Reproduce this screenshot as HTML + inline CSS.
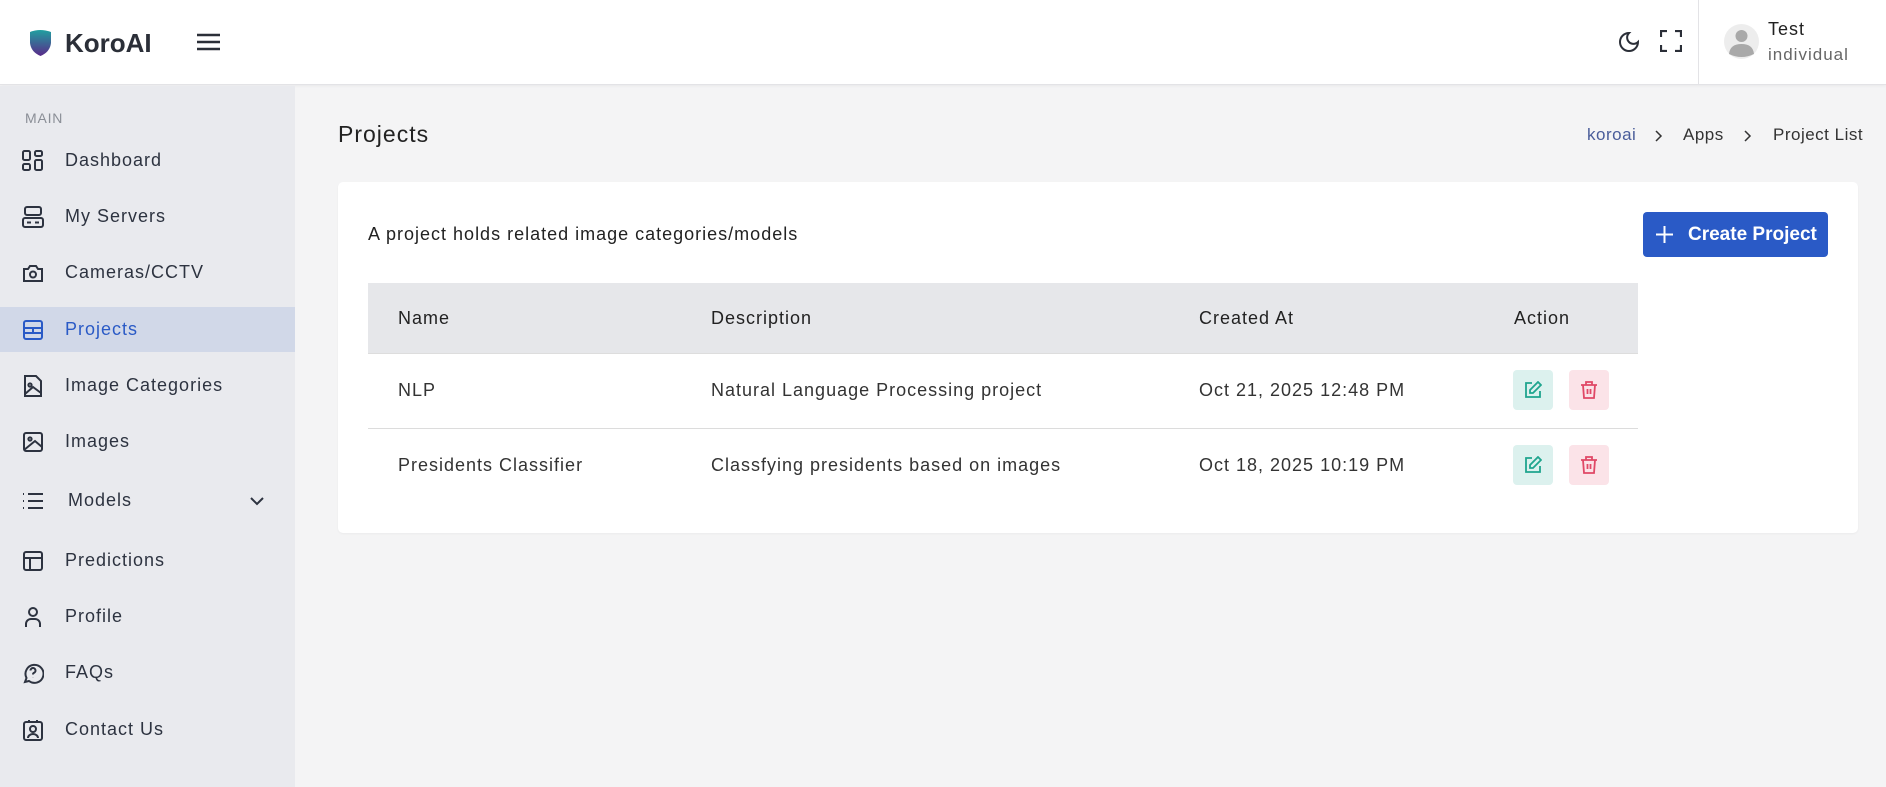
<!DOCTYPE html>
<html><head><meta charset="utf-8"><style>
*{box-sizing:border-box;margin:0;padding:0}
body{width:1886px;height:787px;overflow:hidden;background:#f4f4f5;font-family:"Liberation Sans",sans-serif;color:#2b2f38;position:relative;letter-spacing:1px}
.abs{position:absolute}
.hdr{left:0;top:0;width:1886px;height:85px;background:#fff;border-bottom:1px solid #e3e3e6;box-shadow:0 1px 3px rgba(0,0,0,.05)}
.side{left:0;top:86px;width:295px;height:701px;background:#e9eaee}
.item{position:absolute;left:0;width:295px;height:45px;display:flex;align-items:center;font-size:18px;color:#2d3340}
.item svg{position:absolute;left:22px;width:22px;height:22px}
.item span{position:absolute;left:65px}
.sel{background:#d1d8e8;color:#2a5ac6}
.t{position:absolute;white-space:nowrap}
</style></head><body>
<div class="abs hdr"></div>
<svg class="abs" style="left:28px;top:29px" width="25" height="28" viewBox="0 0 25 28"><defs><linearGradient id="g" x1="0" y1="0" x2="0" y2="1"><stop offset="0" stop-color="#21a0a0"/><stop offset="1" stop-color="#5a2a8a"/></linearGradient></defs><path d="M2 3 Q12 -1 23 3 L23 14 Q22 23 12.5 27 Q3 23 2 14Z" fill="url(#g)"/></svg>
<div class="t" style="left:65px;top:28px;font-size:26px;font-weight:bold;color:#2b2f38;letter-spacing:0">KoroAI</div>
<svg class="abs" style="left:196px;top:32px" width="25" height="20"><path d="M1 3H24M1 10H24M1 17H24" stroke="#2b2f38" stroke-width="2.4"/></svg>
<svg class="abs" style="left:1617px;top:30px" width="24" height="24" viewBox="0 0 24 24" fill="none" stroke="#2b2f38" stroke-width="2"><path d="M12 3a6 6 0 0 0 9 9 9 9 0 1 1-9-9z"/></svg>
<svg class="abs" style="left:1660px;top:30px" width="22" height="22" viewBox="0 0 22 22" fill="none" stroke="#2b2f38" stroke-width="2.2"><path d="M1 7V1H7M15 1H21V7M21 15V21H15M7 21H1V15"/></svg>
<div class="abs" style="left:1698px;top:0;width:1px;height:85px;background:#e3e3e6"></div>
<svg class="abs" style="left:1724px;top:24px" width="35" height="35" viewBox="0 0 35 35"><circle cx="17.5" cy="17.5" r="17.5" fill="#ededed"/><circle cx="17.5" cy="12" r="6" fill="#a9a9a9"/><path d="M5 30Q6 20 17.5 20Q29 20 30 30Q17.5 36 5 30Z" fill="#a9a9a9"/></svg>
<div class="t" style="left:1768px;top:19px;font-size:18px;color:#222">Test</div>
<div class="t" style="left:1768px;top:45px;font-size:17px;color:#666">individual</div>

<div class="abs side"></div>
<div class="t" style="left:25px;top:110px;font-size:14px;color:#8a8e96;letter-spacing:.8px">MAIN</div>
<div class="item" style="top:138px"><svg viewBox="0 0 22 22" fill="none" stroke="#2d3340" stroke-width="2"><rect x="1" y="1" width="7" height="9" rx="1.5"/><rect x="13" y="1" width="7" height="5" rx="1.5"/><rect x="1" y="14" width="7" height="6" rx="1.5"/><rect x="13" y="10" width="7" height="10" rx="1.5"/></svg><span>Dashboard</span></div>
<div class="item" style="top:194px"><svg viewBox="0 0 22 22" fill="none" stroke="#2d3340" stroke-width="2"><rect x="3" y="1" width="16" height="8" rx="2"/><rect x="1" y="12" width="20" height="9" rx="2"/><path d="M5 16.5H9M13 16.5H17"/></svg><span>My Servers</span></div>
<div class="item" style="top:250px"><svg viewBox="0 0 22 22" fill="none" stroke="#2d3340" stroke-width="2"><path d="M2 7h4l2-3h6l2 3h4v12H2z"/><circle cx="11" cy="12.5" r="3"/></svg><span>Cameras/CCTV</span></div>
<div class="item sel" style="top:307px"><svg viewBox="0 0 22 22" fill="none" stroke="#2a5ac6" stroke-width="2"><rect x="2" y="2" width="18" height="18" rx="2"/><path d="M2 9H20M2 14H20M11 9V14"/></svg><span>Projects</span></div>
<div class="item" style="top:363px"><svg viewBox="0 0 22 22" fill="none" stroke="#2d3340" stroke-width="2"><path d="M3 1h11l5 5v15H3z"/><circle cx="8" cy="10" r="1.6"/><path d="M3 19l8-7 8 6"/></svg><span>Image Categories</span></div>
<div class="item" style="top:419px"><svg viewBox="0 0 22 22" fill="none" stroke="#2d3340" stroke-width="2"><rect x="2" y="2" width="18" height="18" rx="2"/><circle cx="8" cy="8" r="1.6"/><path d="M2 19l11-9 7 6"/></svg><span>Images</span></div>
<div class="item" style="top:478px"><svg viewBox="0 0 22 22" fill="none" stroke="#2d3340" stroke-width="2"><path d="M1 4h1M1 11h1M1 18h1M6 4h15M6 11h15M6 18h15"/></svg><span style="left:68px">Models</span><svg style="left:248px;width:18px" viewBox="0 0 18 22" fill="none" stroke="#2d3340" stroke-width="2"><path d="M3 8l6 6 6-6"/></svg></div>
<div class="item" style="top:538px"><svg viewBox="0 0 22 22" fill="none" stroke="#2d3340" stroke-width="2"><rect x="2" y="2" width="18" height="18" rx="2"/><path d="M2 8H20M8 8V20"/></svg><span>Predictions</span></div>
<div class="item" style="top:594px"><svg viewBox="0 0 22 22" fill="none" stroke="#2d3340" stroke-width="2"><circle cx="11" cy="6" r="4"/><path d="M4 21v-3a5 5 0 0 1 5-5h4a5 5 0 0 1 5 5v3"/></svg><span>Profile</span></div>
<div class="item" style="top:650px"><svg viewBox="0 0 22 22" fill="none" stroke="#2d3340" stroke-width="2"><path d="M3 20l1.5-4A9 9 0 1 1 7 19z"/><path d="M8.5 8.5a2.5 2.5 0 1 1 3.5 2.3c-.7.4-1 .8-1 1.7M11 15.5v.1"/></svg><span>FAQs</span></div>
<div class="item" style="top:707px"><svg viewBox="0 0 22 22" fill="none" stroke="#2d3340" stroke-width="2"><rect x="2" y="3" width="18" height="18" rx="2"/><path d="M7 1v3M15 1v3"/><circle cx="11" cy="10" r="3"/><path d="M6 19a5 4 0 0 1 10 0"/></svg><span>Contact Us</span></div>

<div class="t" style="left:338px;top:121px;font-size:23px;color:#222">Projects</div>
<div class="t" style="left:1587px;top:125px;font-size:17px;color:#4a5d9a;letter-spacing:.5px">koroai</div>
<svg class="abs" style="left:1654px;top:129px" width="10" height="14"><path d="M2 2l5 5-5 5" fill="none" stroke="#333" stroke-width="1.5"/></svg>
<div class="t" style="left:1683px;top:125px;font-size:17px;color:#333;letter-spacing:.5px">Apps</div>
<svg class="abs" style="left:1743px;top:129px" width="10" height="14"><path d="M2 2l5 5-5 5" fill="none" stroke="#333" stroke-width="1.5"/></svg>
<div class="t" style="left:1773px;top:125px;font-size:17px;color:#333;letter-spacing:.5px">Project List</div>

<div class="abs" style="left:338px;top:182px;width:1520px;height:351px;background:#fff;border-radius:5px;box-shadow:0 1px 2px rgba(0,0,0,.04)"></div>
<div class="t" style="left:368px;top:224px;font-size:18px;color:#222">A project holds related image categories/models</div>
<div class="abs" style="left:1643px;top:212px;width:185px;height:45px;background:#2a5ac6;border-radius:4px"></div>
<svg class="abs" style="left:1656px;top:226px" width="17" height="17"><path d="M8.5 0V17M0 8.5H17" stroke="#fff" stroke-width="2"/></svg>
<div class="t" style="left:1688px;top:224px;font-size:19px;font-weight:bold;color:#fff;letter-spacing:0">Create Project</div>

<div class="abs" style="left:368px;top:283px;width:1270px;height:71px;background:#e6e7ea;border-bottom:1px solid #ddd"></div>
<div class="t" style="left:398px;top:308px;font-size:18px;color:#222">Name</div>
<div class="t" style="left:711px;top:308px;font-size:18px;color:#222">Description</div>
<div class="t" style="left:1199px;top:308px;font-size:18px;color:#222">Created At</div>
<div class="t" style="left:1514px;top:308px;font-size:18px;color:#222">Action</div>
<div class="abs" style="left:368px;top:428px;width:1270px;height:1px;background:#dcdcdc"></div>
<div class="t" style="left:398px;top:380px;font-size:18px;color:#333">NLP</div>
<div class="t" style="left:711px;top:380px;font-size:18px;color:#333">Natural Language Processing project</div>
<div class="t" style="left:1199px;top:380px;font-size:18px;color:#333">Oct 21, 2025 12:48 PM</div>
<div class="t" style="left:398px;top:455px;font-size:18px;color:#333">Presidents Classifier</div>
<div class="t" style="left:711px;top:455px;font-size:18px;color:#333">Classfying presidents based on images</div>
<div class="t" style="left:1199px;top:455px;font-size:18px;color:#333">Oct 18, 2025 10:19 PM</div>

<div class="abs" style="left:1513px;top:370px;width:40px;height:40px;background:#dcf1ee;border-radius:4px"></div>
<div class="abs" style="left:1569px;top:370px;width:40px;height:40px;background:#fbe3e8;border-radius:4px"></div>
<div class="abs" style="left:1513px;top:445px;width:40px;height:40px;background:#dcf1ee;border-radius:4px"></div>
<div class="abs" style="left:1569px;top:445px;width:40px;height:40px;background:#fbe3e8;border-radius:4px"></div>
<svg class="abs" style="left:1524px;top:381px" width="18" height="18" viewBox="0 0 18 18" fill="none" stroke="#1fa58e" stroke-width="1.8"><path d="M8 2H2v14h14v-6"/><path d="M14 1l3 3-8 8H6V9z"/></svg>
<svg class="abs" style="left:1524px;top:456px" width="18" height="18" viewBox="0 0 18 18" fill="none" stroke="#1fa58e" stroke-width="1.8"><path d="M8 2H2v14h14v-6"/><path d="M14 1l3 3-8 8H6V9z"/></svg>
<svg class="abs" style="left:1580px;top:381px" width="18" height="18" viewBox="0 0 18 18" fill="none" stroke="#e04866" stroke-width="1.8"><path d="M1 4H17M6 4V1H12V4M3 4l1 13h10l1-13M7.5 8v5M10.5 8v5"/></svg>
<svg class="abs" style="left:1580px;top:456px" width="18" height="18" viewBox="0 0 18 18" fill="none" stroke="#e04866" stroke-width="1.8"><path d="M1 4H17M6 4V1H12V4M3 4l1 13h10l1-13M7.5 8v5M10.5 8v5"/></svg>
</body></html>
